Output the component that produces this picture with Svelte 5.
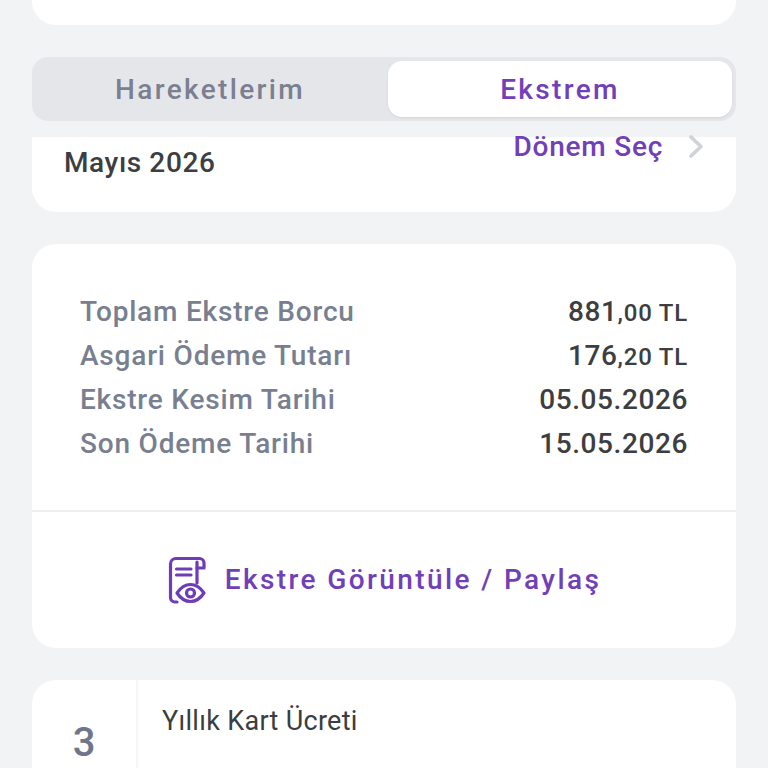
<script>
	const rows = [
		{ label: 'Toplam Ekstre Borcu', whole: '881', cents: ',00 TL' },
		{ label: 'Asgari Ödeme Tutarı', whole: '176', cents: ',20 TL' },
		{ label: 'Ekstre Kesim Tarihi', whole: '05.05.2026' },
		{ label: 'Son Ödeme Tarihi', whole: '15.05.2026' }
	];
	let active = $state('ekstrem');
</script>

<div class="page">
	<div class="card top"></div>

	<div class="tabs">
		<button class="tab" class:on={active === 'hareket'} onclick={() => (active = 'hareket')}>Hareketlerim</button>
		<button class="tab" class:on={active === 'ekstrem'} onclick={() => (active = 'ekstrem')}>Ekstrem</button>
	</div>

	<div class="card period">
		<span class="month">Mayıs 2026</span>
		<span class="pick">
			Dönem Seç
			<svg width="18" height="24" viewBox="0 0 18 24" fill="none" stroke="#cfd2d6" stroke-width="3.6" stroke-linecap="round" stroke-linejoin="round"><path d="M3 3l10 9.500L3 22"/></svg>
		</span>
	</div>

	<div class="card summary">
		<div class="rows">
			{#each rows as row}
				<div class="row">
					<span class="label">{row.label}</span>
					<span class="value">{row.whole}{#if row.cents}<small>{row.cents}</small>{/if}</span>
				</div>
			{/each}
		</div>
		<div class="action">
			<svg width="40" height="48" viewBox="0 0 40 48" fill="none" stroke="#6f3cb8" stroke-width="3.2" stroke-linecap="round" stroke-linejoin="round">
				<path d="M10 46H8a4.500 4.500 0 0 1-4.500-4.500V8A5.500 5.500 0 0 1 9 2.500h23.500A4.500 4.500 0 0 1 37 7v5h-7"/>
				<path d="M30 27V6"/>
				<path d="M9.500 13h14.500M9.500 19h14.500"/>
				<path d="M10 37C14 31 19 28.500 23.500 28.500S33 31 37 37c-4 6-9 8.500-13.500 8.500S14 43 10 37z"/>
				<circle cx="23.500" cy="37" r="4"/>
			</svg>
			<span class="action-text">Ekstre Görüntüle / Paylaş</span>
		</div>
	</div>

	<div class="card fee">
		<div class="count">3</div>
		<div class="fee-name">Yıllık Kart Ücreti</div>
	</div>
</div>

<style>
	:global(body) {
		background: #f1f3f5;
	}

	.page {
		height: 768px;
		overflow: hidden;
		padding: 0 32px;
		box-sizing: border-box;
		font-family: Roboto, "Noto Sans", sans-serif;
	}

	.card {
		background: #fff;
		border-radius: 24px;
	}

	.top {
		height: 25px;
		border-radius: 0 0 24px 24px;
		margin-bottom: 32px;
	}

	.tabs {
		display: grid;
		grid-template-columns: 1fr 344px;
		gap: 4px;
		height: 64px;
		box-sizing: border-box;
		padding: 4px;
		background: #e4e6ea;
		border-radius: 16px;
		margin-bottom: 16px;
	}

	.tab {
		border: 0;
		background: none;
		border-radius: 14px;
		font: 500 28px Roboto, sans-serif;
		letter-spacing: 2.35px;
		color: #7b7f90;
		padding: 0;
	}

	.tab.on {
		background: #fff;
		color: #7140b8;
		box-shadow: 0 1px 2px rgba(0, 0, 0, 0.08);
	}

	.period {
		height: 75px;
		border-radius: 0 0 24px 24px;
		margin-bottom: 32px;
		display: flex;
		justify-content: space-between;
		padding: 0 32px;
		box-sizing: border-box;
	}

	.month {
		font-size: 28px;
		font-weight: 500;
		letter-spacing: 0.6px;
		color: #3c3e42;
		margin-top: 9px;
	}

	.pick {
		display: flex;
		align-items: center;
		gap: 25px;
		height: 18px;
		font-size: 28px;
		font-weight: 500;
		letter-spacing: 0.75px;
		color: #7140b8;
		margin-right: -2px;
	}

	.summary {
		height: 404px;
		margin-bottom: 32px;
	}

	.rows {
		height: 268px;
		box-sizing: border-box;
		padding: 46px 48px 0;
		border-bottom: 2px solid #eceef0;
	}

	.row {
		display: flex;
		justify-content: space-between;
		align-items: baseline;
		height: 44px;
		line-height: 44px;
	}

	.label {
		font-size: 28px;
		font-weight: 500;
		letter-spacing: 0.8px;
		color: #788090;
	}

	.value {
		font-size: 28px;
		font-weight: 500;
		letter-spacing: 0.6px;
		color: #3c3e42;
	}

	.value small {
		font-size: 24px;
		letter-spacing: 0.8px;
	}

	.action {
		display: flex;
		align-items: center;
		justify-content: center;
		gap: 18px;
		height: 136px;
		font-size: 28px;
		font-weight: 500;
		letter-spacing: 2.4px;
		color: #7140b8;
	}

	.action-text {
		padding-bottom: 2px;
	}

	.fee {
		display: flex;
		height: 200px;
	}

	.count {
		width: 104px;
		border-right: 2px solid #f5f6f7;
		text-align: center;
		font-size: 40px;
		font-weight: 500;
		color: #6f7689;
		padding-top: 39px;
	}

	.fee-name {
		padding: 25px 0 0 24px;
		font-size: 27px;
		letter-spacing: 0.3px;
		color: #3b3d40;
	}
</style>
